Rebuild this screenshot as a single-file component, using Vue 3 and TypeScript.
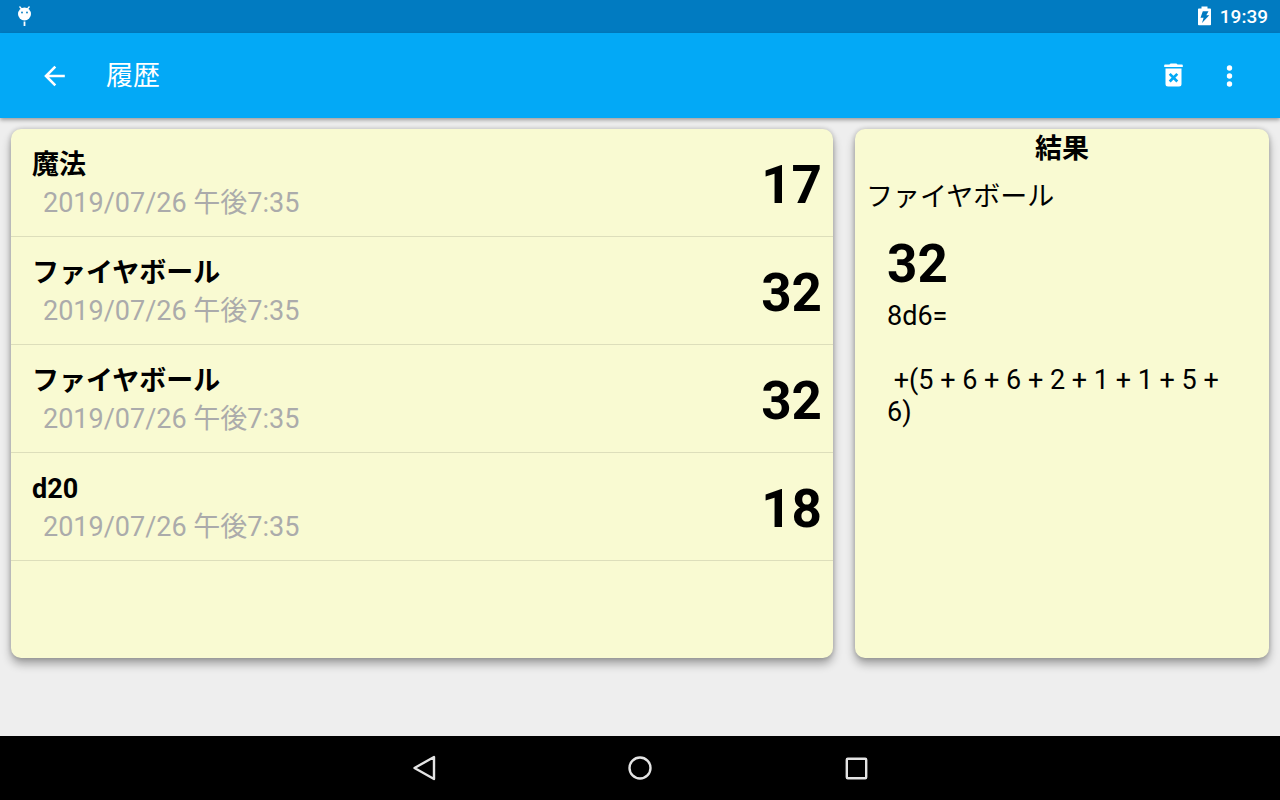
<script setup lang="ts">
import { ref, computed } from 'vue'

interface Roll {
  id: number
  name: string
  date: string
  total: number
  detail: string
}

const date = '2019/07/26 午後7:35'
const fireball = '8d6=\n\n +(5 + 6 + 6 + 2 + 1 + 1 + 5 + 6)'

const rolls: Roll[] = [
  { id: 1, name: '魔法', date, total: 17, detail: '' },
  { id: 2, name: 'ファイヤボール', date, total: 32, detail: fireball },
  { id: 3, name: 'ファイヤボール', date, total: 32, detail: fireball },
  { id: 4, name: 'd20', date, total: 18, detail: 'd20=\n\n +(18)' },
]

const selectedId = ref(2)
const selected = computed<Roll>(() => rolls.find((r) => r.id === selectedId.value) ?? rolls[0])
</script>

<template>
  <div class="screen" lang="ja">
    <div class="status">
      <svg class="notice" width="16" height="22" viewBox="0 0 16 22" aria-hidden="true">
        <path d="M3.500 1.500 6 4.500M13.500 1.500 11 4.500" stroke="#fff" stroke-width="1.300" />
        <circle cx="8.500" cy="9" r="6.500" fill="#fff" />
        <circle cx="6" cy="7.500" r="0.900" fill="#017bc1" />
        <circle cx="11" cy="7.500" r="0.900" fill="#017bc1" />
        <path d="M8.500 16.500v4.500" stroke="#fff" stroke-width="1.800" />
      </svg>
      <svg class="battery" width="14" height="20" viewBox="0 0 14 20" aria-hidden="true">
        <path d="M3.500 0.500h6v2h2.700q0.800 0 0.800 0.800v15.200q0 0.800-0.800 0.800H0.800q-0.800 0-0.800-0.800v-15.200q0-0.800 0.800-0.800H3.500z" fill="#fff" />
        <path d="M4.800 5.200h5.700L8.300 9.300h3L4 17l1.600-5.300H2.500z" fill="#017bc1" />
      </svg>
      <time class="clock">19:39</time>
    </div>

    <header class="toolbar">
      <button class="icon" type="button" aria-label="戻る">
        <svg width="32" height="32" viewBox="0 0 32 32" fill="none" stroke="#fff" stroke-width="2.600">
          <path d="M26.800 16H8.500M17.300 6.600 8 16l9.300 9.400" />
        </svg>
      </button>
      <h1>履歴</h1>
      <button class="icon" type="button" aria-label="履歴を削除">
        <svg width="32" height="32" viewBox="0 0 32 32">
          <path fill="#fff" d="M11.500 4.500q0.500-1 1.500-1h5q1 0 1.500 1h4.500q0.800 0 0.800 0.800v1.700H6.200v-1.700q0-0.800 0.800-0.800zM7.500 8.500h16v15.500q0 2.500-2.500 2.500h-11q-2.500 0-2.500-2.500z" />
          <path fill="none" stroke="#03a9f6" stroke-width="2.700" d="m11.700 13.900 7.600 7.600m0-7.600-7.600 7.600" />
        </svg>
      </button>
      <button class="icon" type="button" aria-label="メニュー">
        <svg width="32" height="32" viewBox="0 0 32 32" fill="#fff"><circle cx="15.500" cy="8" r="2.700" /><circle cx="15.500" cy="16" r="2.700" /><circle cx="15.500" cy="24" r="2.700" /></svg>
      </button>
    </header>

    <main class="content">
      <ul class="card list">
        <li v-for="roll in rolls" :key="roll.id">
          <button class="row" type="button" @click="selectedId = roll.id">
            <span class="info">
              <span class="name">{{ roll.name }}</span>
              <span class="date">{{ roll.date }}</span>
            </span>
            <span class="total">{{ roll.total }}</span>
          </button>
        </li>
      </ul>

      <section class="card result">
        <h2>結果</h2>
        <p class="label">{{ selected.name }}</p>
        <p class="total">{{ selected.total }}</p>
        <p class="detail">{{ selected.detail }}</p>
      </section>
    </main>

    <nav class="navbar">
      <button class="key" type="button" aria-label="戻る">
        <svg width="32" height="32" viewBox="0 0 32 32"><path d="M26 5v22L6.500 16z" /></svg>
      </button>
      <button class="key" type="button" aria-label="ホーム">
        <svg width="32" height="32" viewBox="0 0 32 32"><circle cx="16" cy="16" r="10.500" /></svg>
      </button>
      <button class="key" type="button" aria-label="最近使ったアプリ">
        <svg width="32" height="32" viewBox="0 0 32 32"><rect x="6.800" y="6.800" width="19.400" height="19.400" rx="1" /></svg>
      </button>
    </nav>
  </div>
</template>

<style>
body {
  margin: 0;
}
</style>

<style scoped>
.screen {
  display: flex;
  flex-direction: column;
  min-height: 100vh;
  background: #eeeeee;
  color: #000;
  font-family: Roboto, "Noto Sans CJK JP", sans-serif;
  font-size: 27px;
  line-height: 32px;
}
button {
  border: 0;
  padding: 0;
  background: none;
  color: inherit;
  font: inherit;
  cursor: pointer;
}
svg {
  display: block;
}
h1,
h2,
p,
ul {
  margin: 0;
  padding: 0;
}
.status {
  display: flex;
  align-items: center;
  box-sizing: border-box;
  height: 33px;
  padding: 0 12px 1px 16px;
  background: #017bc1;
  color: #fff;
}
.battery {
  margin-left: auto;
}
.clock {
  margin-left: 8px;
  padding-top: 2px;
  font-size: 19px;
  font-weight: 500;
}
.toolbar {
  position: relative;
  display: flex;
  align-items: center;
  box-sizing: border-box;
  height: 85px;
  padding: 0 22px 0 26px;
  background: #03a9f6;
  color: #fff;
  box-shadow: 0 2px 4px rgba(0, 0, 0, 0.35);
}
.icon {
  display: grid;
  place-items: center;
  width: 56px;
  height: 56px;
}
h1 {
  flex: 1;
  padding-left: 24px;
  font-size: 27px;
  font-weight: 400;
}
.content {
  flex: 1;
  display: grid;
  grid-template-columns: 137fr 69fr;
  gap: 22px;
  padding: 11px 11px 78px;
}
.card {
  min-width: 0;
  border-radius: 10px;
  background: #f9fad2;
  box-shadow: 0 6px 10px rgba(0, 0, 0, 0.32), 0 0 5px rgba(0, 0, 0, 0.2);
}
.list {
  list-style: none;
}
.row {
  display: flex;
  align-items: center;
  width: 100%;
  height: 108px;
  padding: 2px 11px 0 21px;
  border-bottom: 1px solid #dddebb;
  text-align: left;
}
.info {
  flex: 1;
  display: grid;
  gap: 6px;
}
.name {
  font-weight: 700;
}
.date {
  padding-left: 11px;
  color: #ababab;
}
.total {
  font-size: 53px;
  font-weight: 700;
  line-height: 62px;
}
.row .total {
  padding-top: 2px;
}
.result {
  padding: 4px 32px 0;
}
h2 {
  font-size: 27px;
  font-weight: 700;
  text-align: center;
}
.label {
  margin: 16px 0 20px -21px;
}
.detail {
  margin-top: 5px;
  white-space: pre-wrap;
}
.navbar {
  display: flex;
  justify-content: center;
  gap: 120px;
  height: 64px;
  background: #000;
}
.key {
  display: grid;
  place-items: center;
  width: 96px;
}
.key svg {
  fill: none;
  stroke: #e4e4e4;
  stroke-width: 2.4;
  stroke-linejoin: round;
}
</style>
